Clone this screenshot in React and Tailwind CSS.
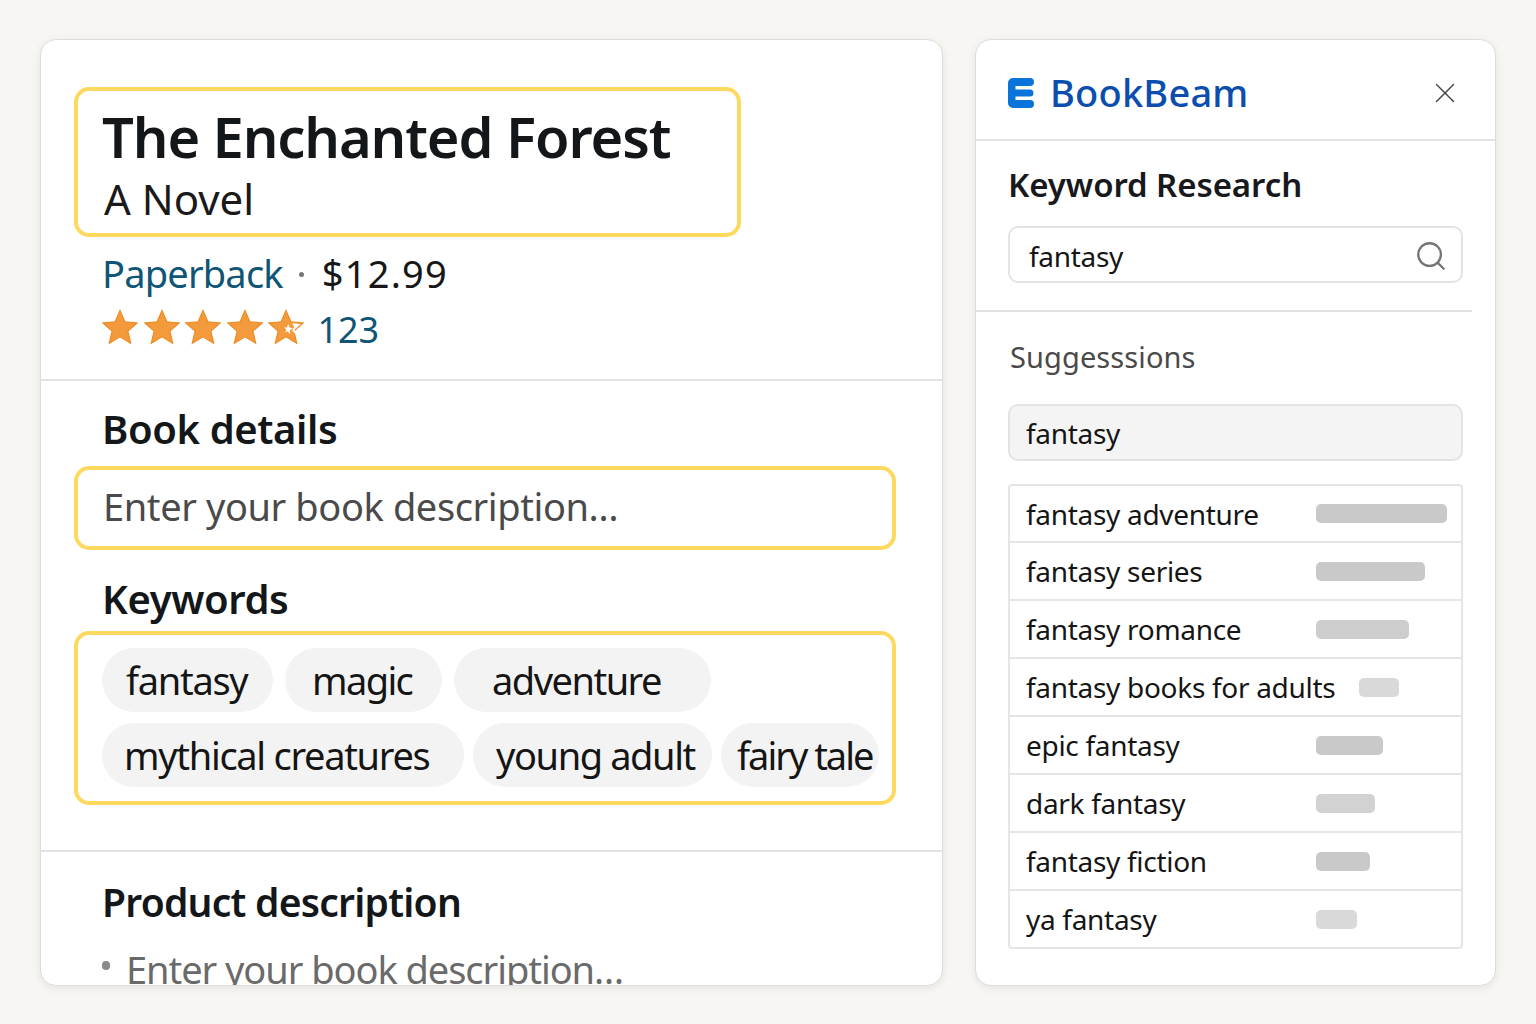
import React from "react";
import { X, Search } from "lucide-react";

const STAR = "M12 1.5l3.1 7.2 7.8.7-5.9 5.2 1.8 7.7L12 18.2l-6.8 4.1 1.8-7.7L1.1 9.4l7.8-.7z";

function Star({ half }) {
  return (
    <svg viewBox="0 0 24 24" className="w-[38px] h-[38px]">
      <path d={STAR} fill="#f29a3c" stroke="#ee8a22" strokeWidth="0.7" strokeLinejoin="miter" />
      {half && <path d="M15.8 9.6l5.6.5-4 3.7.6 2.8-2.2-2.6 1.4-2.2z" fill="#fff" />}
      {half && <path d="M13.4 10l.8 2.3 2.2.5-2 1.1.3 2.6-1.7-1.8-1.4.7.6-2-1.4-1 1.9-.3z" fill="#fff" />}
    </svg>
  );
}

const rows = [
  ["fantasy adventure", 131, "bg-[#c9c9c9]", 0],
  ["fantasy series", 109, "bg-[#c9c9c9]", 0],
  ["fantasy romance", 93, "bg-[#cdcdcd]", 0],
  ["fantasy books for adults", 40, "bg-[#d9d9d9]", 1],
  ["epic fantasy", 67, "bg-[#c9c9c9]", 0],
  ["dark fantasy", 59, "bg-[#d2d2d2]", 0],
  ["fantasy fiction", 54, "bg-[#c9c9c9]", 0],
  ["ya fantasy", 41, "bg-[#d9d9d9]", 0],
];

function Chip({ children, className }) {
  return (
    <span className={"h-[64px] flex items-center rounded-[32px] bg-[#f3f3f3] text-[38px] text-[#151515] whitespace-nowrap " + className}>
      {children}
    </span>
  );
}

export default function App() {
  return (
    <div className="w-[1536px] h-[1024px] bg-[#f7f6f3] flex gap-[32px] pt-[39px] pl-[40px] overflow-hidden font-['Noto_Sans','Open_Sans',sans-serif]">
      <div className="w-[903px] h-[947px] bg-white rounded-[16px] border border-[#dcdcdc] shadow-[0_2px_8px_rgba(0,0,0,0.08)] overflow-hidden flex flex-col">
        <div className="h-[341px] pt-[47px] pl-[33px] border-b-2 border-[#e2e2e2] shrink-0">
          <div className="w-[667px] h-[150px] border-4 border-[#fdd95f] rounded-[15px] pl-[25px] pt-[13px]">
            <div className="text-[56px] leading-[64px] font-semibold text-[#14171a] tracking-[-1.1px] whitespace-nowrap -ml-[1px]">The Enchanted Forest</div>
            <div className="text-[42px] leading-[52px] text-[#1a1a1a] mt-[5px] ml-[1px]">A Novel</div>
          </div>
          <div className="ml-[28px] mt-[10px] flex items-center h-[52px] text-[38px] whitespace-nowrap">
            <span className="text-[#0f5575] tracking-[-0.8px]">Paperback</span>
            <span className="w-[5px] h-[5px] rounded-full bg-[#777777] ml-[16px] mr-[18px] mt-[3px]" />
            <span className="text-[#171717] tracking-[1.2px]">$12.99</span>
          </div>
          <div className="ml-[27px] -mt-[1px] flex items-center h-[58px]">
            <div className="flex gap-[3.6px]">
              <Star /><Star /><Star /><Star /><Star half />
            </div>
            <span className="text-[#0f5575] text-[36px] ml-[12px] mt-[6px]">123</span>
          </div>
        </div>

        <div className="h-[471px] pl-[33px] shrink-0 border-b-2 border-[#e2e2e2]">
          <div className="pl-[28px] pt-[17px] text-[40px] leading-[62px] font-semibold text-[#14171a] tracking-[-0.4px]">Book details</div>
          <div className="w-[822px] h-[84px] mt-[6px] border-4 border-[#fdd95f] rounded-[15px] pl-[25px] pb-[3px] flex items-center text-[38px] text-[#4a4a4a] tracking-[-0.4px]">
            Enter your book description…
          </div>
          <div className="pl-[28px] pt-[18px] text-[40px] leading-[62px] font-semibold text-[#14171a] tracking-[-0.4px]">Keywords</div>
          <div className="w-[822px] h-[174px] mt-[1px] border-4 border-[#fdd95f] rounded-[15px] pl-[24px] pt-[13px] flex flex-col gap-[11px]">
            <div className="flex">
              <Chip className="w-[171px] pl-[24px] tracking-[-1.3px]">fantasy</Chip>
              <Chip className="w-[157px] pl-[27px] ml-[12px] tracking-[-1.6px]">magic</Chip>
              <Chip className="w-[257px] pl-[38px] ml-[12px] tracking-[-1.5px]">adventure</Chip>
            </div>
            <div className="flex">
              <Chip className="w-[362px] pl-[22px] tracking-[-1.3px]">mythical creatures</Chip>
              <Chip className="w-[239px] pl-[23px] ml-[9px] tracking-[-1.4px]">young adult</Chip>
              <Chip className="w-[158px] pl-[16px] ml-[9px] tracking-[-2px]">fairy tale</Chip>
            </div>
          </div>
        </div>

        <div className="pl-[61px] pt-[18px] overflow-hidden flex-1 min-h-0">
          <div className="text-[39px] leading-[64px] font-semibold text-[#14171a] tracking-[-0.75px]">Product description</div>
          <div className="flex items-center text-[38px] text-[#6a6a6a] mt-[7px] whitespace-nowrap tracking-[-1.05px]">
            <span className="w-[8px] h-[9px] rounded-full bg-[#8a8a8a] mr-[16px] -mt-[8px]" />
            Enter your book description…
          </div>
        </div>
      </div>

      <div className="w-[521px] h-[947px] bg-white rounded-[16px] border border-[#dcdcdc] shadow-[0_2px_8px_rgba(0,0,0,0.08)] overflow-hidden flex flex-col">
        <div className="h-[101px] border-b-2 border-[#e2e2e2] flex items-center pl-[32px] pr-[33px] pt-[7px] shrink-0">
          <svg width="26" height="30" viewBox="0 0 26 30" className="shrink-0">
            <path d="M5 0H22a4 4 0 0 1 0 8H7.5v3.5H22a3.5 3.5 0 0 1 0 7H7.5V22H22a4 4 0 0 1 0 8H5a5 5 0 0 1-5-5V5a5 5 0 0 1 5-5z" fill="#0a74db" />
          </svg>
          <span className="text-[38px] font-medium text-[#0b4eae] ml-[16px] tracking-[0.2px] flex-1 -mt-[2px]">BookBeam</span>
          <X size={34} strokeWidth={1} className="text-[#444444]" />
        </div>
        <div className="h-[169px] pl-[32px] pr-[32px] shrink-0">
          <div className="pt-[20px] text-[33px] leading-[48px] font-semibold text-[#17191c] tracking-[-0.08px]">Keyword Research</div>
          <div className="mt-[17px] h-[57px] w-[455px] border-2 border-[#e4e4e4] rounded-[10px] flex items-center pl-[19px] pr-[13px] justify-between text-[28px] text-[#151515] tracking-[-0.3px]">
            <span className="mt-[2px]">fantasy</span>
            <Search size={34} strokeWidth={1.6} className="text-[#757575] mt-[2px]" />
          </div>
        </div>
        <div className="mr-[23px] border-t-2 border-[#e2e2e2]" />
        <div className="pl-[32px] pr-[32px]">
          <div className="pl-[2px] pt-[23px] text-[29px] leading-[44px] text-[#4a4a4a] tracking-[0.1px]">Suggesssions</div>
          <div className="mt-[25px] h-[57px] w-[455px] border-2 border-[#e3e3e3] bg-[#f4f4f4] rounded-[10px] flex items-center pl-[16px] text-[28px] text-[#151515] tracking-[-0.3px]">fantasy</div>
          <div className="mt-[23px] w-[455px] border-2 border-[#e5e5e5] rounded-[4px]">
            {rows.map(([label, w, c, near], i) => (
              <div key={label} className={(i ? "h-[58px] border-t-2 border-[#e5e5e5] " : "h-[55px] ") + "flex items-center pl-[16px] text-[28px] text-[#151515] tracking-[-0.3px]"}>
                <span className={near ? "w-[333px] whitespace-nowrap shrink-0" : "w-[290px] whitespace-nowrap shrink-0"}>{label}</span>
                <span className={"h-[19px] rounded-[5px] " + c} style={{ width: w }} />
              </div>
            ))}
          </div>
        </div>
      </div>
    </div>
  );
}
